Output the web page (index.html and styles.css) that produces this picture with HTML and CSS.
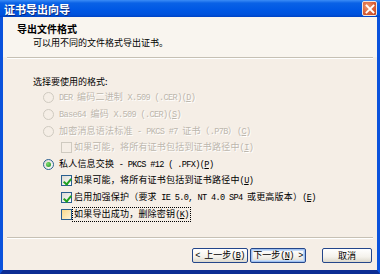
FILE: index.html
```html
<!DOCTYPE html>
<html lang="zh-CN">
<head>
<meta charset="utf-8">
<title>证书导出向导</title>
<link rel="stylesheet" href="styles.css">
</head>
<body>
<div class="window">
  <div class="titlebar">
    <span class="title">证书导出向导</span>
    <span class="close"><svg width="10" height="10" viewBox="0 0 10 10"><path d="M1.5 1.5 L8.5 8.5 M8.5 1.5 L1.5 8.5" stroke="#fff" stroke-width="1.8" stroke-linecap="square"/></svg></span>
  </div>
  <div class="frame">
    <div class="header">
      <div class="h-title">导出文件格式</div>
      <div class="h-sub">可以用不同的文件格式导出证书。</div>
    </div>
    <div class="sep"></div>
    <div class="content">
      <div class="prompt">选择要使用的格式:</div>
      <div class="options">
        <div class="opt disabled"><span class="radio"></span><span class="lbl"><span class="a">DER </span>编码二进制<span class="a"> X.509 (.CER)(<u>D</u>)</span></span></div>
        <div class="opt disabled"><span class="radio"></span><span class="lbl"><span class="a">Base64 </span>编码<span class="a"> X.509 (.CER)(<u>S</u>)</span></span></div>
        <div class="opt disabled"><span class="radio"></span><span class="lbl">加密消息语法标准<span class="a"> - PKCS #7 </span>证书（<span class="a">.P7B</span>）<span class="a">(<u>C</u>)</span></span></div>
        <div class="opt sub disabled"><span class="check"></span><span class="lbl">如果可能，将所有证书包括到证书路径中<span class="a">(<u>I</u>)</span></span></div>
        <div class="opt"><span class="radio on"></span><span class="lbl">私人信息交换<span class="a"> - PKCS #12 ( .PFX)(<u>P</u>)</span></span></div>
        <div class="opt sub"><span class="check on"></span><span class="lbl">如果可能，将所有证书包括到证书路径中<span class="a">(<u>U</u>)</span></span></div>
        <div class="opt sub"><span class="check on"></span><span class="lbl">启用加强保护（要求<span class="a"> IE 5.0, NT 4.0 SP4 </span>或更高版本）<span class="a">(<u>E</u>)</span></span></div>
        <div class="opt sub"><span class="check hot"></span><span class="lbl focus">如果导出成功，删除密钥<span class="a">(<u>K</u>)</span></span></div>
      </div>
    </div>
    <div class="sep"></div>
    <div class="buttons">
      <button class="btn"><span class="a">&lt; </span>上一步<span class="a">(<u>B</u>)</span></button>
      <button class="btn default">下一步<span class="a">(<u>N</u>) &gt;</span></button>
      <button class="btn cancel">取消</button>
    </div>
  </div>
</div>
</body>
</html>
```

FILE: styles.css
```css
* { box-sizing: border-box; }
html, body { margin: 0; padding: 0; }
body {
  width: 380px;
  height: 274px;
  overflow: hidden;
  font-family: "Noto Sans CJK SC", "Noto Sans", sans-serif;
  font-size: 9px;
  color: #000;
  background: #0c2d94;
}
.window {
  width: 380px;
  height: 274px;
  display: flex;
  flex-direction: column;
}
.titlebar {
  height: 17px;
  flex: none;
  display: flex;
  align-items: center;
  justify-content: space-between;
  padding: 0 3px 0 4px;
  background: linear-gradient(to bottom, #3b8cf6 0%, #0a62e6 18%, #0058e4 55%, #0052dc 85%, #0043c4 100%);
}
.title {
  color: #fff;
  font-size: 11px;
  font-weight: bold;
  line-height: 12px;
  text-shadow: 1px 1px 0 #0a2a80;
}
.close {
  width: 15px;
  height: 15px;
  border: 1px solid #f3e6dc;
  border-radius: 2px;
  background: radial-gradient(circle at 35% 35%, #f09a70 0%, #d8613a 55%, #c0401c 100%);
  display: flex;
  align-items: center;
  justify-content: center;
}
.frame {
  flex: 1;
  display: flex;
  flex-direction: column;
  background: #f5eee6;
  border-left: 3px solid #0b52dc;
  border-right: 3px solid #0b52dc;
  border-bottom: 4px solid #0c2d94;
}
.header {
  height: 40px;
  flex: none;
  background: #f9f5ef;
  padding: 6px 0 0 14px;
}
.h-title {
  font-size: 10px;
  font-weight: bold;
  line-height: 12px;
}
.h-sub {
  margin: 2px 0 0 16px;
  line-height: 12px;
}
.sep {
  flex: none;
  height: 2px;
  margin: 0 4px;
  border-top: 1px solid #c6c0b4;
  border-bottom: 1px solid #fff;
}
.content {
  flex: 1;
  padding: 17px 0 0 30px;
}
.prompt {
  line-height: 12px;
}
.options {
  margin-top: 1.7px;
  margin-left: 10px;
}
.opt {
  height: 16.6px;
  display: flex;
  align-items: center;
  gap: 4px;
  white-space: nowrap;
}
.opt.sub { margin-left: 18px; gap: 1px; }
.opt.disabled .lbl { color: #bdb7ad; text-shadow: 1px 1px 0 #fff; }
.lbl { line-height: 12px; padding: 0 1px; letter-spacing: 0.2px; }
.a {
  font-family: "Liberation Mono", "DejaVu Sans Mono", monospace;
  font-size: 8.6px;
  letter-spacing: -0.65px;
  white-space: pre;
}
.lbl.focus { outline: 1px dotted #000; outline-offset: 0; }
.radio {
  width: 11px;
  height: 11px;
  flex: none;
  border-radius: 50%;
  border: 1px solid #2a5f90;
  background: linear-gradient(135deg, #dcdad2, #fff);
  display: flex;
  align-items: center;
  justify-content: center;
}
.opt.disabled .radio { border-color: #cfcac0; background: #f5eee6; }
.radio.on::after {
  content: "";
  width: 5px;
  height: 5px;
  border-radius: 50%;
  background: radial-gradient(circle at 35% 35%, #7adf6c, #1f8a1f);
}
.check {
  width: 11px;
  height: 11px;
  flex: none;
  border: 1px solid #2a5f90;
  background: linear-gradient(135deg, #dcdad2, #fff);
  position: relative;
}
.opt.disabled .check { border-color: #cfcac0; background: #f5eee6; }
.check.on::after {
  content: "";
  position: absolute;
  left: 2.5px;
  top: 0.5px;
  width: 3px;
  height: 6px;
  border-right: 2px solid #21a121;
  border-bottom: 2px solid #21a121;
  transform: rotate(40deg);
}
.check.hot {
  border-color: #2a5f90;
  background: linear-gradient(135deg, #f8d98a, #fdf3d6);
}
.buttons {
  height: 31px;
  flex: none;
  display: flex;
  justify-content: flex-end;
  align-items: flex-start;
  padding: 9px 5px 0 0;
}
.btn {
  font: inherit;
  font-size: 9px;
  height: 15px;
  width: 56px;
  padding: 0;
  line-height: 11px;
  color: #000;
  border: 1px solid #24468a;
  border-radius: 2px;
  background: linear-gradient(to bottom, #fff 0%, #f4f2ec 60%, #dcd8cc 100%);
  white-space: nowrap;
}
.btn + .btn { margin-left: 2px; }
.btn.default { box-shadow: inset 0 0 0 1px #9fc0f0, inset 0 0 0 2px #c8dcf6; }
.btn.cancel { width: 50px; margin-left: 16px; }
u { text-decoration: underline; }
```
